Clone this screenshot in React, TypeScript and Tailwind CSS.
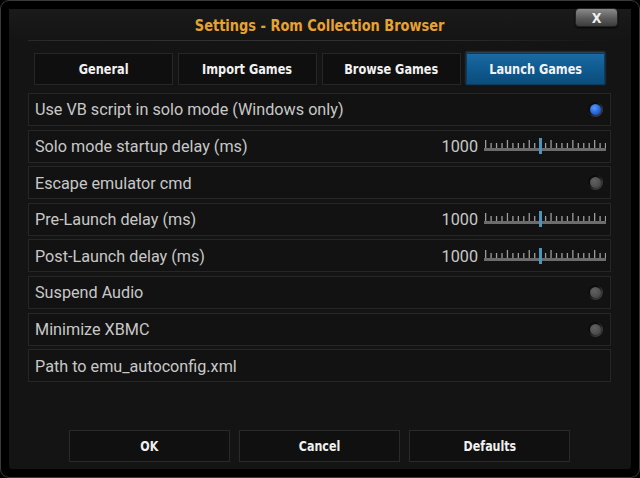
import React from 'react';

const tabs = ['General', 'Import Games', 'Browse Games', 'Launch Games'];

type Row = { label: string; kind: 'radio-on' | 'radio-off' | 'slider' | 'none'; value?: string };

const rows: Row[] = [
  { label: 'Use VB script in solo mode (Windows only)', kind: 'radio-on' },
  { label: 'Solo mode startup delay (ms)', kind: 'slider', value: '1000' },
  { label: 'Escape emulator cmd', kind: 'radio-off' },
  { label: 'Pre-Launch delay (ms)', kind: 'slider', value: '1000' },
  { label: 'Post-Launch delay (ms)', kind: 'slider', value: '1000' },
  { label: 'Suspend Audio', kind: 'radio-off' },
  { label: 'Minimize XBMC', kind: 'radio-off' },
  { label: 'Path to emu_autoconfig.xml', kind: 'none' },
];

const condensed = { fontFamily: '"DejaVu Sans Condensed", "DejaVu Sans", sans-serif' };

function Slider() {
  const ticks = [];
  for (let i = 0; i <= 22; i++) {
    const x = 1 + i * 5.45;
    const tall = i % 4 === 0;
    ticks.push(<rect key={i} x={x} y={tall ? 3 : 6} width="1.3" height={tall ? 8 : 5} fill="#9c9c9c" />);
  }
  return (
    <svg width="122" height="18" viewBox="0 0 122 18">
      {ticks}
      <rect x="0" y="11" width="122" height="3" fill="#6c6c6c" />
      <rect x="55" y="1" width="3" height="16" fill="#4f93ba" />
    </svg>
  );
}

function Radio({ on }: { on: boolean }) {
  return (
    <div className="w-[15px] h-[15px] rounded-full bg-[#0c0c0c] shadow-[inset_-2px_-2px_2px_rgba(130,130,130,0.4)] flex items-center justify-center">
      <div
        className={
          on
            ? 'w-[11px] h-[11px] rounded-full bg-[radial-gradient(circle_at_40%_35%,#5a98f7,#1f62da_60%,#153f94)]'
            : 'w-[11px] h-[11px] rounded-full bg-[radial-gradient(circle_at_40%_35%,#626262,#4a4a4a_70%,#383838)]'
        }
      />
    </div>
  );
}

export default function App() {
  return (
    <div className="w-[640px] h-[478px] bg-black">
      <div className="w-full h-full rounded-[9px] border border-[#3a3a3a] bg-black p-[8px]">
        <div className="relative flex flex-col h-full bg-[#141414] rounded-[3px]">
          {/* title */}
          <div className="h-[31px] flex items-center justify-center bg-[linear-gradient(#1a1a1a,#141414)]">
            <span className="inline-block scale-x-[0.9] text-[16px] font-bold text-[#e6a233] mt-[3px]" style={condensed}>
              Settings - Rom Collection Browser
            </span>
          </div>
          <div className="mx-[19px] h-[1px] bg-[linear-gradient(90deg,#2a2a2a,#333_40%,#2a2a2a_75%,transparent)]" />
          <div className="absolute top-[-1px] right-[13px] w-[43px] h-[19px] rounded-[4px] border border-[#222] bg-[linear-gradient(#8a8a8a,#5a5a5a_55%,#3c3c3c)] shadow-[0_1px_2px_rgba(0,0,0,0.8)] flex items-center justify-center">
            <span className="text-[14px] font-bold text-[#f0f0f0] leading-none" style={condensed}>X</span>
          </div>

          {/* tabs */}
          <div className="flex gap-[5px] mt-[12px] ml-[25px] mr-[26px]">
            {tabs.map((t, i) => (
              <div
                key={t}
                className={
                  i === 3
                    ? 'flex-1 h-[32px] flex items-center justify-center bg-[linear-gradient(#1a6aa3,#0f5a8f_50%,#0b4c7a)] border border-[#0c3b5e] shadow-[0_-1px_2px_rgba(90,160,210,0.5)]'
                    : 'flex-1 h-[32px] flex items-center justify-center bg-[#0f0f0f] border border-[#262626]'
                }
              >
                <span className="inline-block scale-x-[0.9] text-[14px] font-bold text-[#f2f2f2]" style={condensed}>{t}</span>
              </div>
            ))}
          </div>

          {/* settings list */}
          <div className="flex flex-col gap-[3.6px] mt-[8px] ml-[19px] mr-[20px]">
            {rows.map((r) => (
              <div
                key={r.label}
                className="h-[33px] flex items-center border border-[#262626] bg-[#121212] pl-[6px] pr-[4px]"
                style={{ fontFamily: 'Roboto, "Open Sans", sans-serif' }}
              >
                <span className="flex-1 mt-[2px] text-[16.2px] text-[#c8c8c8]">{r.label}</span>
                {r.kind === 'slider' && (
                  <div className="flex items-center gap-[6px]">
                    <span className="mt-[2px] text-[16.2px] text-[#c8c8c8]">{r.value}</span>
                    <Slider />
                  </div>
                )}
                {(r.kind === 'radio-on' || r.kind === 'radio-off') && (
                  <div className="mr-[3px]">
                    <Radio on={r.kind === 'radio-on'} />
                  </div>
                )}
              </div>
            ))}
          </div>

          {/* buttons */}
          <div className="mt-auto mb-[7px] ml-[60px] flex gap-[9px]">
            {['OK', 'Cancel', 'Defaults'].map((b) => (
              <div
                key={b}
                className="w-[161px] h-[32px] flex items-center justify-center bg-[#101010] border border-[#2a2a2a]"
              >
                <span className="inline-block scale-x-[0.88] text-[14px] font-bold text-[#f0f0f0]" style={condensed}>{b}</span>
              </div>
            ))}
          </div>
        </div>
      </div>
    </div>
  );
}
